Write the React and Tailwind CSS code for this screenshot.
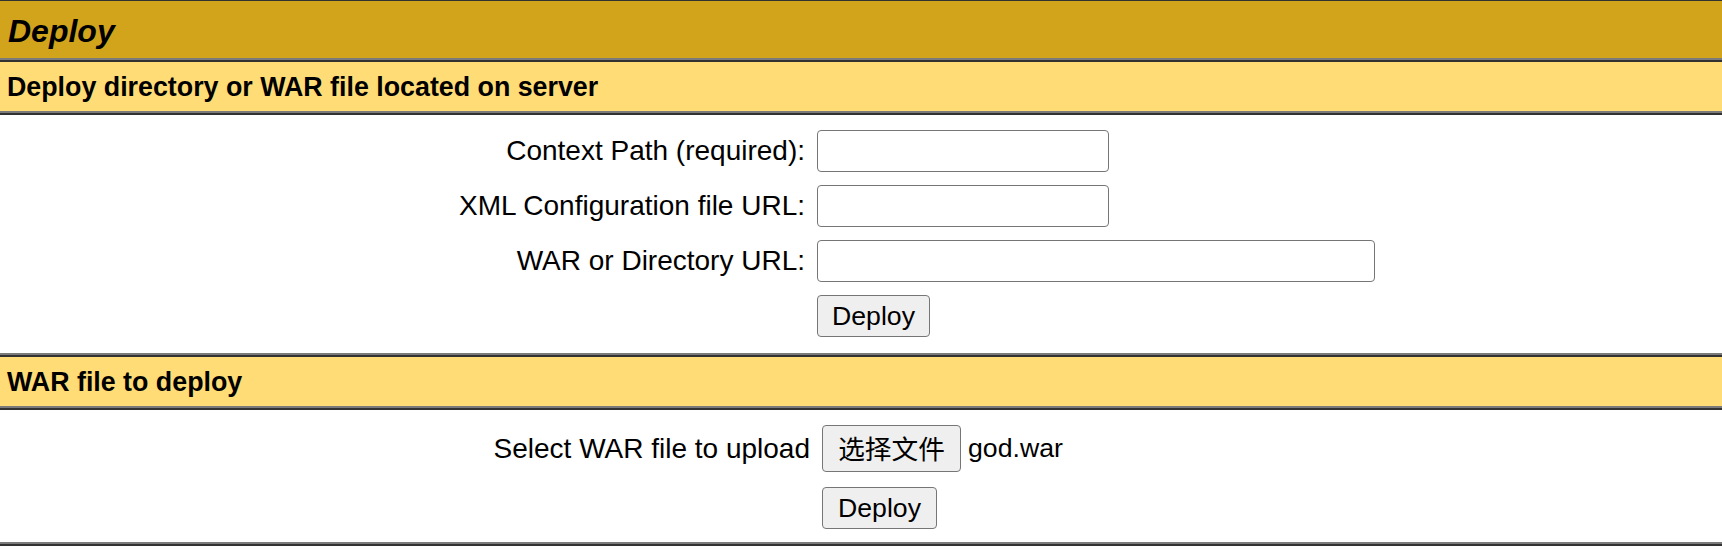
import React from "react";

function Sep() {
  return (
    <div>
      <div className="h-[2px] bg-[#7b7b7b]" />
      <div className="h-[2px] bg-[#323232]" />
    </div>
  );
}

function Row({ label, children, labelW = "w-[811px]" }) {
  return (
    <div className="flex items-center">
      <div className={`${labelW} shrink-0 pr-[6px] text-right text-[28px] leading-none text-black`}>
        {label}
      </div>
      <div className="flex items-center pl-[6px]">{children}</div>
    </div>
  );
}

function TextInput({ w }) {
  return (
    <input
      type="text"
      className={`h-[42px] ${w} rounded-[4px] border border-[#767676] bg-white outline-none`}
    />
  );
}

function Btn({ children, cls = "" }) {
  return (
    <button
      type="button"
      className={`flex items-center justify-center rounded-[4px] border border-[#767676] bg-[#efefef] text-[26.67px] leading-none text-black ${cls}`}
    >
      {children}
    </button>
  );
}

export default function App() {
  return (
    <div className="w-[1722px] h-[560px] overflow-hidden bg-white font-['Liberation_Sans','Noto_Sans_CJK_SC',sans-serif] text-black">
      <div className="h-[1px] bg-[#323232]" />
      <div className="flex h-[57px] items-center bg-[#D2A41C] pl-[8px] pt-[2px] text-[32px] font-bold italic">
        Deploy
      </div>
      <Sep />
      <div className="flex h-[49px] items-center bg-[#FFDC75] pl-[7px] pt-[2px] text-[26.8px] font-bold">
        Deploy directory or WAR file located on server
      </div>
      <Sep />
      <div className="flex h-[238px] flex-col gap-[13px] pt-[15px]">
        <Row label="Context Path (required):">
          <TextInput w="w-[292px]" />
        </Row>
        <Row label="XML Configuration file URL:">
          <TextInput w="w-[292px]" />
        </Row>
        <Row label="WAR or Directory URL:">
          <TextInput w="w-[558px]" />
        </Row>
        <Row label="">
          <Btn cls="h-[42px] w-[113px]">Deploy</Btn>
        </Row>
      </div>
      <Sep />
      <div className="flex h-[49px] items-center bg-[#FFDC75] pl-[7px] pt-[2px] text-[26.8px] font-bold">
        WAR file to deploy
      </div>
      <Sep />
      <div className="flex h-[132px] flex-col gap-[15px] pt-[15px]">
        <Row label="Select WAR file to upload" labelW="w-[816px]">
          <Btn cls="h-[47px] w-[139px] font-['Noto_Sans_CJK_SC',sans-serif]">选择文件</Btn>
          <span className="ml-[7px] text-[26.67px] leading-none">god.war</span>
        </Row>
        <Row label="" labelW="w-[816px]">
          <Btn cls="h-[42px] w-[115px]">Deploy</Btn>
        </Row>
      </div>
      <Sep />
    </div>
  );
}
